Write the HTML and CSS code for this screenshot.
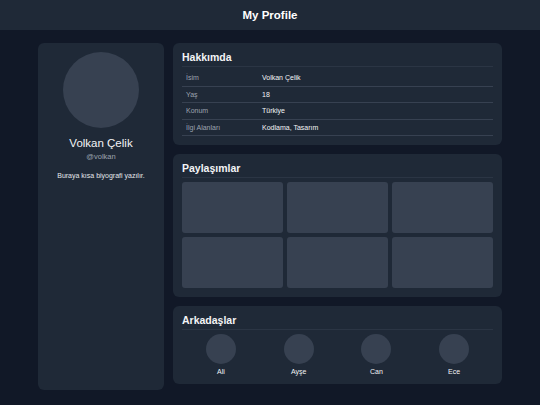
FILE: index.html
```html
<!DOCTYPE html>
<html lang="tr">
  <head>
    <meta charset="UTF-8" />
    <meta name="viewport" content="width=device-width, initial-scale=1.0" />
    <title>My Profile</title>
    <link rel="stylesheet" href="styles.css">
  </head>
  <body>
    <header class="topbar">My Profile</header>

    <div class="container">
      <!-- Sol: profil kartı -->
      <aside class="card profile">
        <div class="avatar"></div>
        <h2 class="name">Volkan Çelik</h2>
        <p class="handle">@volkan</p>
        <p class="bio">Buraya kısa biyografi yazılır.</p>
      </aside>

      <main class="content">
        <section class="card">
          <h3 class="card-title">Hakkımda</h3>
          <table class="info">
            <tr><td>İsim</td><td>Volkan Çelik</td></tr>
            <tr><td>Yaş</td><td>18</td></tr>
            <tr><td>Konum</td><td>Türkiye</td></tr>
            <tr><td>İlgi Alanları</td><td>Kodlama, Tasarım</td></tr>
          </table>
        </section>

        <section class="card">
          <h3 class="card-title">Paylaşımlar</h3>
          <div class="posts">
            <div class="post"></div>
            <div class="post"></div>
            <div class="post"></div>
            <div class="post"></div>
            <div class="post"></div>
            <div class="post"></div>
          </div>
        </section>

        <section class="card">
          <h3 class="card-title">Arkadaşlar</h3>
          <div class="friends">
            <div class="friend"><div class="friend-avatar"></div><span>Ali</span></div>
            <div class="friend"><div class="friend-avatar"></div><span>Ayşe</span></div>
            <div class="friend"><div class="friend-avatar"></div><span>Can</span></div>
            <div class="friend"><div class="friend-avatar"></div><span>Ece</span></div>
          </div>
        </section>
      </main>
    </div>
  </body>
</html>
```

FILE: styles.css
```css
body {
  margin: 0;
  background: #111827;
  color: #f3f4f6;
  font-family: "Liberation Sans", Arial, sans-serif;
}
.topbar {
  height: 30px;
  line-height: 30px;
  background: #1f2937;
  text-align: center;
  font-weight: bold;
  font-size: 11.5px;
  color: #fff;
}
.container {
  width: 464px;
  margin: 13px auto 0;
  display: flex;
  gap: 9px;
  align-items: flex-start;
}
.card {
  background: #1f2937;
  border-radius: 6px;
  padding: 8px 9px 9px;
  box-sizing: border-box;
}
/* Profile */
.profile {
  width: 126px;
  min-height: 347px;
  padding-top: 9px;
  text-align: center;
  flex-shrink: 0;
}
.avatar {
  width: 76px;
  height: 76px;
  border-radius: 50%;
  background: #374151;
  margin: 0 auto;
}
.name {
  margin: 9px 0 0;
  font-size: 11.5px;
  font-weight: normal;
  color: #f3f4f6;
}
.handle {
  margin: 3px 0 0;
  font-size: 7.5px;
  color: #9ca3af;
}
.bio {
  margin: 11px 0 0;
  font-size: 7px;
  color: #e5e7eb;
}
/* Right column */
.content {
  flex: 1;
  display: flex;
  flex-direction: column;
  gap: 9px;
}
.card-title {
  margin: 0;
  font-size: 10.5px;
  font-weight: bold;
  color: #f3f4f6;
  padding-bottom: 3px;
  border-bottom: 1px solid #2b3544;
}
.info {
  width: 100%;
  margin-top: 3px;
  border-collapse: collapse;
  font-size: 7px;
}
.info td {
  height: 15.5px;
  padding: 0 4px;
  border-bottom: 1px solid #374151;
  color: #f3f4f6;
}
.info td:first-child {
  width: 68px;
  color: #9ca3af;
}
.posts {
  margin-top: 4px;
  display: grid;
  grid-template-columns: repeat(3, 1fr);
  gap: 4px;
}
.post {
  height: 51px;
  background: #374151;
  border-radius: 3px;
}
.friends {
  margin-top: 4px;
  display: grid;
  grid-template-columns: repeat(4, 1fr);
}
.friend {
  display: flex;
  flex-direction: column;
  align-items: center;
  font-size: 7px;
  color: #f3f4f6;
}
.friend-avatar {
  width: 30px;
  height: 30px;
  border-radius: 50%;
  background: #374151;
  margin-bottom: 4px;
}
```
